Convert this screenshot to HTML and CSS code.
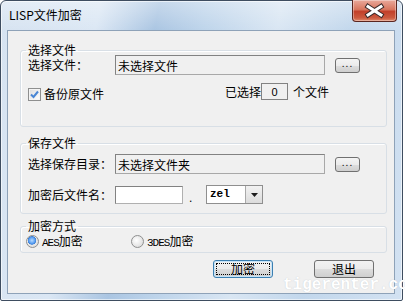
FILE: index.html
```html
<!DOCTYPE html>
<html lang="zh-CN">
<head>
    <meta charset="UTF-8">
    <title>LISP文件加密</title>
    <link rel="stylesheet" href="styles.css">
</head>
<body>
    <div class="window">
        <div class="titlebar">
            <span class="title">LISP文件加密</span>
            <button class="close-btn" type="button">
                <svg width="43" height="20" viewBox="0 0 43 20">
                    <path d="M15 5.5 L28 14 M28 5.5 L15 14" stroke="#3a2a2a" stroke-width="5" stroke-linecap="square" fill="none"/>
                    <path d="M15 5.5 L28 14 M28 5.5 L15 14" stroke="#ffffff" stroke-width="3" stroke-linecap="square" fill="none"/>
                </svg>
            </button>
        </div>
        <div class="client">
            <fieldset class="group group-source">
                <legend>选择文件</legend>
                <div class="row row-path">
                    <label class="row-label">选择文件：</label>
                    <input class="field field-readonly" type="text" value="未选择文件" readonly>
                    <button class="browse-btn" type="button">...</button>
                </div>
                <div class="row row-options">
                    <label class="check">
                        <span class="check-box">
                            <svg width="11" height="11" viewBox="0 0 11 11">
                                <path d="M2 5.5 L4.5 8 L9 2.5" stroke="#4a86d4" stroke-width="2" fill="none"/>
                            </svg>
                        </span>
                        <span>备份原文件</span>
                    </label>
                    <span class="count">已选择<span class="count-box">0</span>个文件</span>
                </div>
            </fieldset>

            <fieldset class="group group-target">
                <legend>保存文件</legend>
                <div class="row row-path">
                    <label class="row-label">选择保存目录：</label>
                    <input class="field field-readonly" type="text" value="未选择文件夹" readonly>
                    <button class="browse-btn" type="button">...</button>
                </div>
                <div class="row row-name">
                    <label class="row-label">加密后文件名：</label>
                    <input class="field field-name" type="text" value="">
                    <span class="dot">.</span>
                    <div class="combo">
                        <span class="combo-value">zel</span>
                        <span class="combo-arrow">
                            <svg width="7" height="4" viewBox="0 0 7 4"><path d="M0 0 H7 L3.5 4 Z" fill="#1c1c1c"/></svg>
                        </span>
                    </div>
                </div>
            </fieldset>

            <fieldset class="group group-mode">
                <legend>加密方式</legend>
                <div class="row row-radios">
                    <label class="radio radio-aes"><span class="radio-dot checked"></span><span><span class="latin">AES</span>加密</span></label>
                    <label class="radio"><span class="radio-dot"></span><span><span class="latin">3DES</span>加密</span></label>
                </div>
            </fieldset>

            <div class="actions">
                <button class="push-btn default" type="button"><span class="focus-ring">加密</span></button>
                <button class="push-btn" type="button">退出</button>
            </div>
        </div>
    </div>
    <div class="watermark">tigerenter.com</div>
</body>
</html>
```

FILE: styles.css
```css
* {
    margin: 0;
    padding: 0;
    box-sizing: border-box;
}

body {
    width: 405px;
    height: 302px;
    background: #ffffff;
    font-family: "Noto Sans CJK SC", "Liberation Sans", sans-serif;
    font-size: 12px;
    line-height: 14px;
    color: #000000;
    position: relative;
    overflow: hidden;
}

.window {
    width: 403px;
    height: 301px;
    border: 1px solid #3e4d60;
    border-radius: 6px 6px 2px 2px;
    padding: 0 7px 6px 6px;
    display: flex;
    flex-direction: column;
    background:
        linear-gradient(to bottom, rgba(255,255,255,0.35), rgba(255,255,255,0) 30px),
        linear-gradient(100deg, #d6e3f1 0%, #dbe7f4 22%, #aac5e2 35%, #bcd3ea 45%, #d9e6f3 62%, #c2d7ec 78%, #d3e2f2 100%);
    box-shadow: inset 0 0 0 1px rgba(255,255,255,0.6);
}

.titlebar {
    height: 29px;
    display: flex;
    align-items: flex-start;
    justify-content: space-between;
}

.title {
    margin: 6px 0 0 2px;
    font-size: 12px;
    line-height: 16px;
    color: #000000;
}

.close-btn {
    width: 45px;
    height: 22px;
    margin: -1px -2px 0 0;
    border: 1px solid #5a2620;
    border-top: none;
    border-radius: 0 0 4px 4px;
    background: linear-gradient(to bottom, #e9a99b 0%, #d8765f 45%, #c2402a 55%, #cc5a3f 85%, #e08a6c 100%);
    box-shadow: inset 0 0 0 1px rgba(255,255,255,0.35);
    display: flex;
    align-items: center;
    justify-content: center;
}

.client {
    flex: 1;
    border: 1px solid #8ea2b8;
    background: #f0f0f0;
    padding: 14px 7px 0 12px;
    display: flex;
    flex-direction: column;
}

.group {
    border: 1px solid #d8dfe6;
    border-radius: 3px;
    padding: 0 7px;
    box-shadow: 1px 1px 0 #ffffff inset;
}

.group legend {
    padding: 0 2px;
    margin-left: -2px;
    line-height: 10px;
}

.group-source {
    padding-bottom: 26px;
}

.group-target {
    margin-top: 11px;
    padding-bottom: 9px;
}

.group-mode {
    margin-top: 7px;
    padding-bottom: 4px;
}

.row {
    display: flex;
    align-items: center;
}

.row-label {
    width: 87px;
    flex-shrink: 0;
}

.group-source .row-path {
    margin-top: 0;
}

.group-target .row-path {
    margin-top: 6px;
}

.field {
    height: 20px;
    border: 1px solid #7a7a7a;
    font-family: "Noto Sans CJK SC", sans-serif;
    font-size: 12px;
    padding: 0 2px;
    color: #000000;
    outline: none;
}

.field-readonly {
    width: 210px;
    background: #f0f0f0;
    border-color: #828282 #a8a8a8 #a8a8a8 #828282;
}

.browse-btn {
    width: 25px;
    height: 15px;
    margin-left: 10px;
    border: 1px solid #707070;
    border-radius: 3px;
    background: linear-gradient(to bottom, #f4f4f4 0%, #ebebeb 50%, #dddddd 51%, #cfcfcf 100%);
    font-family: "Liberation Sans", sans-serif;
    font-size: 10px;
    line-height: 8px;
    color: #000000;
    letter-spacing: 1px;
    padding-bottom: 3px;
}

.row-options {
    margin-top: 8px;
    height: 17px;
    align-items: flex-end;
}

.check {
    width: 197px;
    display: flex;
    align-items: center;
    gap: 3px;
    margin-bottom: -1px;
}

.check-box {
    width: 13px;
    height: 13px;
    border: 1px solid #8e8f8f;
    background: linear-gradient(135deg, #dcdcdc, #ffffff);
    box-shadow: inset 0 0 0 1px #f4f4f4;
    display: flex;
    align-items: center;
    justify-content: center;
}

.count {
    display: flex;
    align-items: center;
    align-self: stretch;
}

.count-box {
    width: 27px;
    height: 17px;
    margin: 0 5px 0 0;
    border: 1px solid #828282;
    display: flex;
    align-items: center;
    justify-content: center;
    font-family: "Liberation Sans", sans-serif;
    font-size: 11px;
}

.row-name {
    margin-top: 11px;
    height: 19px;
}

.field-name {
    width: 68px;
    height: 18px;
    background: #ffffff;
    border-color: #828282 #b0b0b0 #b0b0b0 #828282;
}

.dot {
    width: 23px;
    padding-left: 6px;
    align-self: flex-end;
    line-height: 12px;
    font-family: "Liberation Sans", sans-serif;
}

.combo {
    width: 57px;
    height: 19px;
    border: 1px solid #8f8f8f;
    background: #ffffff;
    display: flex;
}

.combo-value {
    flex: 1;
    padding-left: 3px;
    font-family: "Liberation Mono", monospace;
    font-weight: bold;
    font-size: 11px;
    line-height: 17px;
}

.combo-arrow {
    width: 17px;
    border-left: 1px solid #a9a9a9;
    background: linear-gradient(to bottom, #f2f2f2, #dcdcdc);
    display: flex;
    align-items: center;
    justify-content: center;
}

.row-radios {
    margin-top: 4px;
    margin-left: -2px;
    height: 13px;
}

.radio {
    display: flex;
    align-items: center;
    gap: 3px;
}

.radio-aes {
    width: 105px;
}

.radio-dot {
    width: 13px;
    height: 13px;
    border: 1px solid #8e8f8f;
    border-radius: 50%;
    background: radial-gradient(circle at 40% 40%, #ffffff, #d4d4d4);
}

.radio-dot.checked {
    background:
        radial-gradient(circle at 45% 40%, #b9dcff 0, #5a9ff2 3px, #3a7fd6 4px, transparent 4.5px),
        radial-gradient(circle at 40% 40%, #ffffff, #d4d4d4);
}

.latin {
    font-family: "Liberation Mono", monospace;
    font-size: 11px;
    letter-spacing: -1px;
}

.actions {
    margin-top: 7px;
    padding-left: 193px;
    display: flex;
    gap: 41px;
}

.push-btn {
    width: 60px;
    height: 18px;
    border: 1px solid #707070;
    border-radius: 3px;
    background: linear-gradient(to bottom, #f2f2f2 0%, #ebebeb 50%, #dddddd 51%, #cfcfcf 100%);
    font-family: "Noto Sans CJK SC", sans-serif;
    font-size: 12px;
    line-height: 14px;
    color: #000000;
    display: flex;
    align-items: center;
    justify-content: center;
}

.push-btn.default {
    border-color: #3c7fb1;
    box-shadow: inset 0 0 0 1px #c6e4f8;
    padding: 2px;
}

.focus-ring {
    width: 100%;
    height: 100%;
    border: 1px dotted #000000;
    display: flex;
    align-items: center;
    justify-content: center;
}

.watermark {
    position: absolute;
    left: 283px;
    top: 278px;
    font-family: "Liberation Mono", monospace;
    font-weight: bold;
    font-size: 16px;
    line-height: 14px;
    color: #ffffff;
    text-shadow: 0 0 1px rgba(160, 170, 180, 0.6);
    white-space: nowrap;
}
```
